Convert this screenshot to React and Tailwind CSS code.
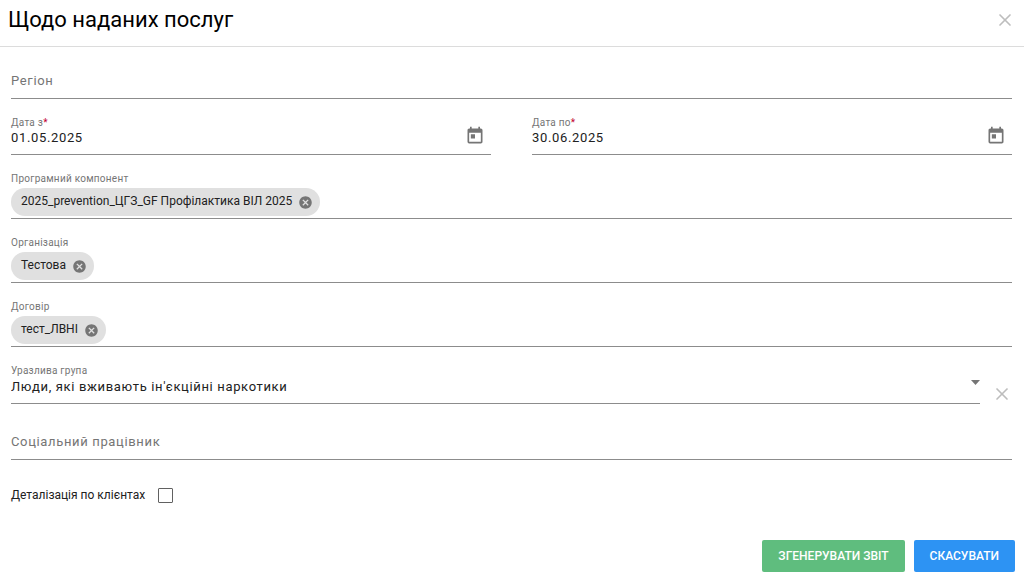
import React from "react";
import { X } from "lucide-react";
import { MdCancel, MdToday } from "react-icons/md";

function Label({ htmlFor, required, children }) {
  return (
    <label htmlFor={htmlFor} className="block text-[10px] leading-[12px] tracking-wide text-[#757575]">
      {children}
      {required && <span className="text-[#c2002f]">*</span>}
    </label>
  );
}

function TextField({ id, placeholder }) {
  return (
    <div className="border-b border-[#8c8c8c] pt-[9px] pb-2">
      <input
        id={id}
        type="text"
        aria-label={placeholder}
        placeholder={placeholder}
        className="block h-5 w-full text-[13px] tracking-wider outline-none placeholder:text-[#757575]"
      />
    </div>
  );
}

function DateField({ id, label, value }) {
  return (
    <div className="flex items-center border-b border-[#8c8c8c] pb-[7px]">
      <div className="min-w-0 flex-1">
        <Label htmlFor={id} required>{label}</Label>
        <input
          id={id}
          type="text"
          defaultValue={value}
          className="block h-[18px] w-full text-[13px] tracking-wider text-[#212121] outline-none"
        />
      </div>
      <button type="button" aria-label="Календар" className="mt-2 mr-1.5 text-[#757575]">
        <MdToday size={20} />
      </button>
    </div>
  );
}

function ChipField({ id, label, chips }) {
  return (
    <div className="border-b border-[#8c8c8c] pb-0.5">
      <Label htmlFor={id}>{label}</Label>
      <div className="mt-[3px] flex flex-wrap items-center gap-2">
        {chips.map((chip) => (
          <span key={chip} className="flex h-7 items-center gap-1.5 rounded-full bg-[#e0e0e0] pr-[7px] pl-2.5 text-[12px] text-[#212121]">
            <span className="pb-0.5">{chip}</span>
            <button type="button" aria-label={`Видалити ${chip}`} className="text-[#757575]">
              <MdCancel size={15} />
            </button>
          </span>
        ))}
        <input id={id} type="text" className="h-7 min-w-8 flex-1 outline-none" />
      </div>
    </div>
  );
}

export default function App() {
  return (
    <div className="bg-white font-[Roboto,sans-serif] text-[#212121]">
      <header className="flex h-[47px] items-center justify-between border-b border-[#dcdcdc] pr-[9px] pb-[7px] pl-2">
        <h1 className="text-[22px] leading-7 text-black">Щодо наданих послуг</h1>
        <button type="button" aria-label="Закрити" className="text-[#bdbdbd]">
          <X size={20} strokeWidth={2} />
        </button>
      </header>

      <form onSubmit={(e) => e.preventDefault()}>
        <div className="flex flex-col gap-[18px] pt-[14px] pr-3 pl-[11px]">
          <TextField id="region" placeholder="Регіон" />

          <div className="grid grid-cols-2 gap-[41px]">
            <DateField id="date-from" label="Дата з" value="01.05.2025" />
            <DateField id="date-to" label="Дата по" value="30.06.2025" />
          </div>

          <ChipField id="component" label="Програмний компонент" chips={["2025_prevention_ЦГЗ_GF Профілактика ВІЛ 2025"]} />
          <ChipField id="organization" label="Організація" chips={["Тестова"]} />
          <ChipField id="contract" label="Договір" chips={["тест_ЛВНІ"]} />

          <div className="flex items-end gap-3">
            <div className="min-w-0 flex-1 border-b border-[#8c8c8c] pb-1.5">
              <Label htmlFor="group">Уразлива група</Label>
              <div className="relative">
                <select
                  id="group"
                  defaultValue="pwid"
                  className="block h-5 w-full appearance-none text-[13px] leading-5 tracking-wider text-[#212121] outline-none"
                >
                  <option value="pwid">Люди, які вживають ін'єкційні наркотики</option>
                </select>
                <svg viewBox="0 0 10 5" className="pointer-events-none absolute top-[3px] right-0 h-[5px] w-2.5 fill-[#757575]">
                  <path d="M1 0h9L5.5 5z" />
                </svg>
              </div>
            </div>
            <button type="button" aria-label="Очистити" className="text-[#bdbdbd]">
              <X size={20} strokeWidth={2} />
            </button>
          </div>

          <TextField id="worker" placeholder="Соціальний працівник" />
        </div>

        <div className="mt-[25px] flex h-5 items-center gap-[13px] pl-[11px]">
          <label htmlFor="details" className="text-[12px]">Деталізація по клієнтах</label>
          <input
            id="details"
            type="checkbox"
            className="size-[15px] appearance-none rounded-[1px] border border-[#616161] checked:bg-[#2d93f3]"
          />
        </div>

        <div className="mt-[35px] flex justify-end gap-[9px] pr-[9px]">
          <button type="submit" className="h-8 rounded-xs bg-[#5fbd7e] px-4 text-[12px] font-medium text-white">
            ЗГЕНЕРУВАТИ ЗВІТ
          </button>
          <button type="button" className="h-8 rounded-xs bg-[#2d93f3] px-4 text-[12px] font-medium text-white">
            СКАСУВАТИ
          </button>
        </div>
      </form>
    </div>
  );
}
